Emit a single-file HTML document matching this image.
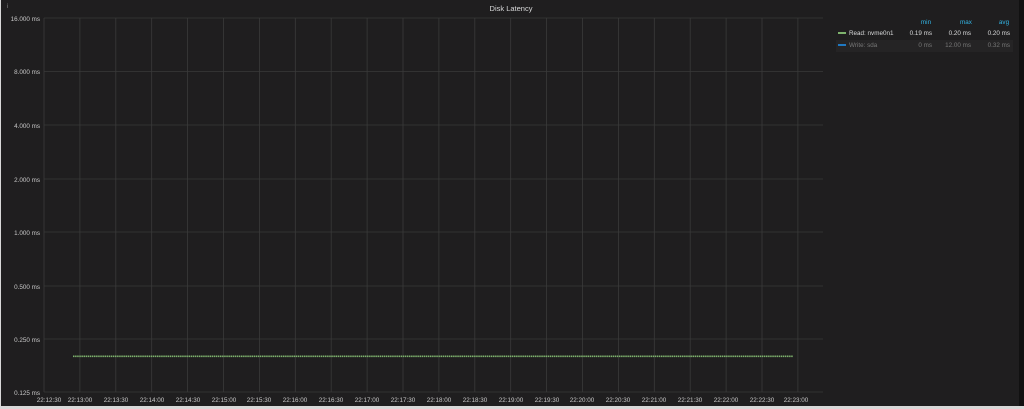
<!DOCTYPE html>
<html><head><style>
html,body{margin:0;padding:0;background:#d8d8d8;width:1024px;height:409px;overflow:hidden}
.p{position:absolute;left:1px;top:0;width:1018px;height:406px;background:#1f1e1f;font-family:"Liberation Sans",sans-serif}
.r{position:absolute;left:1019px;top:0;width:5px;height:406px;background:#111}
</style></head><body>
<div class="p"></div><div class="r"></div>
<svg width="1024" height="409" style="position:absolute;left:0;top:0" font-family="Liberation Sans, sans-serif">
<text x="511" y="11" fill="#d8d9da" font-size="7.5" text-anchor="middle">Disk Latency</text>
<text x="7" y="8" fill="#888" font-size="6">i</text>
<g stroke="#3a3a3a" stroke-width="0.8">
<line x1="44" y1="18" x2="823" y2="18"/><line x1="44" y1="71.5" x2="823" y2="71.5"/><line x1="44" y1="125" x2="823" y2="125"/><line x1="44" y1="179" x2="823" y2="179"/><line x1="44" y1="232" x2="823" y2="232"/><line x1="44" y1="286" x2="823" y2="286"/><line x1="44" y1="339" x2="823" y2="339"/><line x1="44" y1="392" x2="823" y2="392"/>
<line x1="44" y1="18" x2="44" y2="392"/><line x1="79.9" y1="18" x2="79.9" y2="392"/><line x1="115.8" y1="18" x2="115.8" y2="392"/><line x1="151.7" y1="18" x2="151.7" y2="392"/><line x1="187.6" y1="18" x2="187.6" y2="392"/><line x1="223.5" y1="18" x2="223.5" y2="392"/><line x1="259.4" y1="18" x2="259.4" y2="392"/><line x1="295.3" y1="18" x2="295.3" y2="392"/><line x1="331.2" y1="18" x2="331.2" y2="392"/><line x1="367.1" y1="18" x2="367.1" y2="392"/><line x1="403" y1="18" x2="403" y2="392"/><line x1="438.9" y1="18" x2="438.9" y2="392"/><line x1="474.8" y1="18" x2="474.8" y2="392"/><line x1="510.7" y1="18" x2="510.7" y2="392"/><line x1="546.6" y1="18" x2="546.6" y2="392"/><line x1="582.5" y1="18" x2="582.5" y2="392"/><line x1="618.4" y1="18" x2="618.4" y2="392"/><line x1="654.3" y1="18" x2="654.3" y2="392"/><line x1="690.2" y1="18" x2="690.2" y2="392"/><line x1="726.1" y1="18" x2="726.1" y2="392"/><line x1="762" y1="18" x2="762" y2="392"/><line x1="797.9" y1="18" x2="797.9" y2="392"/>
</g>
<g fill="#c8c8c8" font-size="6.3" text-anchor="end">
<text x="40" y="21">16.000 ms</text><text x="40" y="74">8.000 ms</text><text x="40" y="128">4.000 ms</text><text x="40" y="182">2.000 ms</text><text x="40" y="235">1.000 ms</text><text x="40" y="289">0.500 ms</text><text x="40" y="342">0.250 ms</text><text x="40" y="395">0.125 ms</text>
</g>
<g fill="#c8c8c8" font-size="6.3" text-anchor="middle">
<text x="49" y="402">22:12:30</text><text x="80" y="402">22:13:00</text><text x="116" y="402">22:13:30</text><text x="152" y="402">22:14:00</text><text x="188" y="402">22:14:30</text><text x="224" y="402">22:15:00</text><text x="259" y="402">22:15:30</text><text x="295" y="402">22:16:00</text><text x="331" y="402">22:16:30</text><text x="367" y="402">22:17:00</text><text x="403" y="402">22:17:30</text><text x="439" y="402">22:18:00</text><text x="475" y="402">22:18:30</text><text x="511" y="402">22:19:00</text><text x="547" y="402">22:19:30</text><text x="582" y="402">22:20:00</text><text x="618" y="402">22:20:30</text><text x="654" y="402">22:21:00</text><text x="690" y="402">22:21:30</text><text x="726" y="402">22:22:00</text><text x="762" y="402">22:22:30</text><text x="796" y="402">22:23:00</text>
</g>
<line x1="73" y1="356.3" x2="793" y2="356.3" stroke="#7eb26d" stroke-width="1.6" stroke-dasharray="1.5,0.6"/>
<g font-size="6.3">
<text x="926" y="24" fill="#33b5e5" text-anchor="middle">min</text><text x="966" y="24" fill="#33b5e5" text-anchor="middle">max</text><text x="1004" y="24" fill="#33b5e5" text-anchor="middle">avg</text>
<rect x="838" y="32" width="8" height="2" fill="#7eb26d"/>
<text x="849" y="35" fill="#d8d9da">Read: nvme0n1</text>
<text x="932" y="35" fill="#d8d9da" text-anchor="end">0.19 ms</text><text x="971" y="35" fill="#d8d9da" text-anchor="end">0.20 ms</text><text x="1010" y="35" fill="#d8d9da" text-anchor="end">0.20 ms</text>
<rect x="836" y="40" width="177" height="12" fill="#252425"/>
<rect x="838" y="44" width="8" height="2" fill="#1f78c1"/>
<text x="849" y="47" fill="#777">Write: sda</text>
<text x="932" y="47" fill="#777" text-anchor="end">0 ms</text><text x="971" y="47" fill="#777" text-anchor="end">12.00 ms</text><text x="1010" y="47" fill="#777" text-anchor="end">0.32 ms</text>
</g>
</svg>
</body></html>
